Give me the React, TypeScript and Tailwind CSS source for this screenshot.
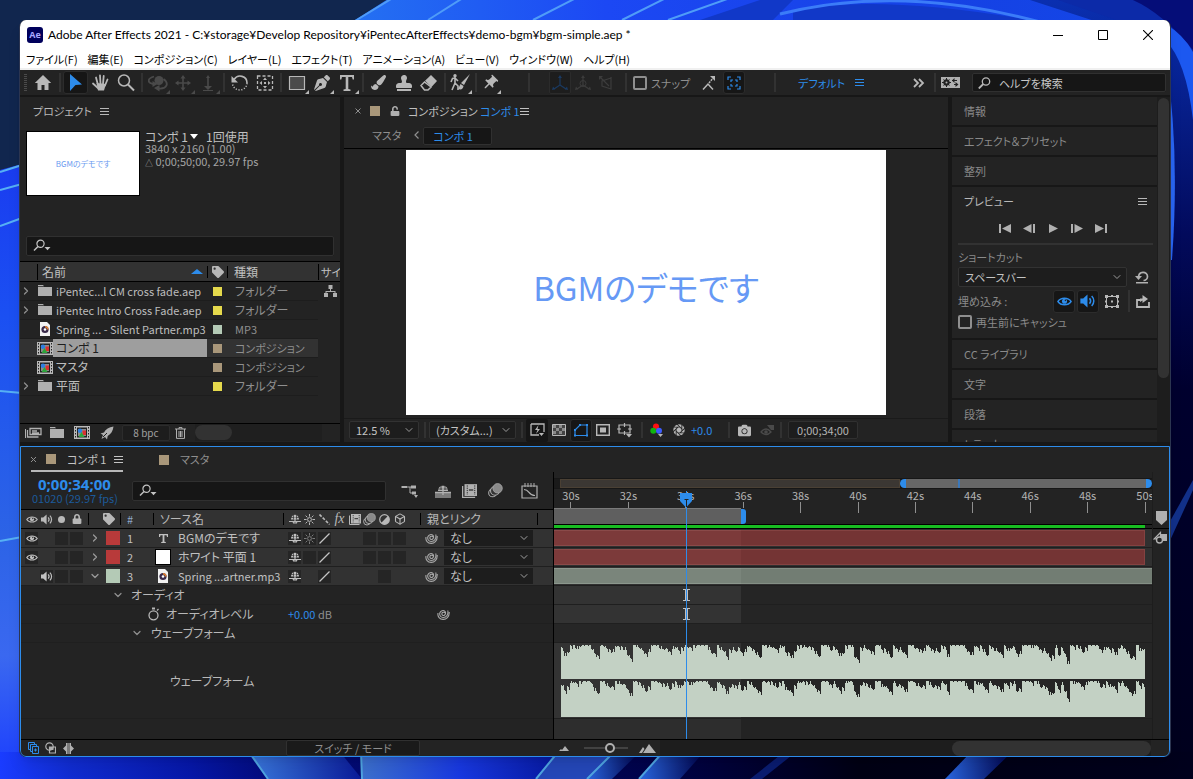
import React from "react";
import { FaCamera, FaEraser, FaLock, FaPaintBrush, FaPenNib, FaStamp, FaTag, FaUnlock } from "react-icons/fa";
import { IoAperture } from "react-icons/io5";
import { MdPushPin } from "react-icons/md";
import { Box, ChevronDown, ChevronRight } from "lucide-react";

type Kids = { children?: React.ReactNode };

function Svg({ w = 20, h = 20, className = "", children }: { w?: number; h?: number; className?: string } & Kids) {
  return (
    <svg width={w} height={h} viewBox={`0 0 ${w} ${h}`} fill="currentColor" aria-hidden="true" className={`shrink-0 ${className}`}>
      {children}
    </svg>
  );
}

/* ---------- icons ---------- */

const Burger = ({ className = "" }: { className?: string }) => (
  <Svg w={9} h={9} className={className}>
    <path d="M0 1.500h9M0 4.500h9M0 7.500h9" stroke="currentColor" strokeWidth="1" fill="none" />
  </Svg>
);

const SearchDrop = () => (
  <Svg w={18} h={14} className="text-[#c4c4c4]">
    <circle cx="7.5" cy="4.8" r="3.6" fill="none" stroke="currentColor" strokeWidth="1.2" />
    <path d="M5 7.4 1 11.4" stroke="currentColor" strokeWidth="1.4" />
    <path d="M11.5 8h6l-3 3.2z" />
  </Svg>
);

const Folder = ({ className = "" }: { className?: string }) => (
  <Svg w={14} h={12} className={`text-[#b0b0b0] ${className}`}>
    <path d="M0 0h5l1 1.2H0z M0 2h14v9H0z" />
  </Svg>
);

const CompIcon = () => (
  <Svg w={16} h={13}>
    <path d="M0 0h16v13H0z" fill="#b8b8b8" />
    <path d="M3 1.5h10v10H3z" fill="#222" />
    <path d="M1 1h1v1.5H1zM1 4h1v1.5H1zM1 7h1v1.5H1zM1 10h1v1.5H1zM14 1h1v1.5h-1zM14 4h1v1.5h-1zM14 7h1v1.5h-1zM14 10h1v1.5h-1z" fill="#222" />
    <path d="M4 3h8v7H4z" fill="#8c8c8c" />
    <circle cx="6" cy="4.8" r="2.2" fill="#2d7fe0" />
    <path d="M8.5 4.5H12V9H8.5z" fill="#d83030" />
    <path d="M7.5 6 10.5 11h-6z" fill="#2da53a" />
  </Svg>
);

const AudioFile = () => (
  <Svg w={12} h={14}>
    <path d="M1 0h7l3 3v11H1z" fill="#f2f2f2" />
    <circle cx="6" cy="7.5" r="3.6" fill="#3a2a4a" />
    <path d="M6 3.9a3.6 3.6 0 0 1 3.6 3.6H8A2 2 0 0 0 6 5.5z" fill="#e08030" />
    <circle cx="6" cy="7.5" r="1.3" fill="#fff" />
  </Svg>
);

const Eye = ({ w = 13, h = 9 }: { w?: number; h?: number }) => (
  <svg width={w} height={h} viewBox="0 0 13 9" aria-hidden="true" className="shrink-0">
    <path d="M.8 4.5C3.2.8 9.8.8 12.2 4.5 9.8 8.2 3.2 8.2.8 4.5z" fill="none" stroke="currentColor" strokeWidth="1.2" />
    <circle cx="6.5" cy="4.3" r="2.2" fill="currentColor" />
    <circle cx="7.3" cy="3.5" r=".7" fill="#222" />
  </svg>
);

const Speaker = ({ w = 12, h = 11 }: { w?: number; h?: number }) => (
  <svg width={w} height={h} viewBox="0 0 12 11" aria-hidden="true" className="shrink-0">
    <path d="M0 3.5h2.2L5.6.4v10.2L2.2 7.5H0z" fill="currentColor" />
    <path d="M7.2 3.4c1 1.2 1 3 0 4.2M8.9 1.6c2.2 2.2 2.2 5.6 0 7.8" fill="none" stroke="currentColor" strokeWidth="1.2" />
  </svg>
);

const Shy = ({ className = "" }: { className?: string }) => (
  <Svg w={12} h={10} className={className}>
    <path d="M2 5.5C2-1 10-1 10 5.5z" />
    <path d="M4.5 1v4.5M7.5 1v4.5M2 3.5h8" stroke="#333" strokeWidth=".7" />
    <path d="M0 7.5h12" stroke="currentColor" strokeWidth="1" />
    <path d="M6 1v8.5M3.500 7 5 9.500M8.500 7 7 9.500" stroke="currentColor" strokeWidth="1.200" fill="none" />
  </Svg>
);

const Sun = ({ className = "" }: { className?: string }) => (
  <Svg w={11} h={11} className={className}>
    <circle cx="5.5" cy="5.5" r="1.9" fill="none" stroke="currentColor" strokeWidth="1" />
    <path d="M5.5 0v2.6M5.5 8.4V11M0 5.5h2.6M8.4 5.5H11M1.6 1.6l1.8 1.8M7.6 7.6l1.8 1.8M1.6 9.4l1.8-1.8M7.6 3.4l1.8-1.8" stroke="currentColor" strokeWidth="1" />
  </Svg>
);

const Film = ({ w = 12, h = 11 }: { w?: number; h?: number }) => (
  <svg width={w} height={h} viewBox="0 0 12 11" aria-hidden="true" className="shrink-0">
    <path d="M2 0h10v9.5H2z" fill="currentColor" />
    <path d="M.5 1.5v9h10" fill="none" stroke="currentColor" strokeWidth="1" />
    <path d="M4.2 1v7.5M10.2 1v7.5" stroke="#292929" strokeWidth=".8" strokeDasharray="1 .8" />
    <path d="M5.5 4.7H9" stroke="#292929" strokeWidth="1" />
  </svg>
);

const Blur = ({ w = 13, h = 13 }: { w?: number; h?: number }) => (
  <svg width={w} height={h} viewBox="0 0 13 13" aria-hidden="true" className="shrink-0">
    <circle cx="4" cy="8.6" r="3.4" fill="none" stroke="currentColor" strokeWidth=".9" />
    <circle cx="6" cy="6.8" r="3.8" fill="#333" stroke="currentColor" strokeWidth=".9" />
    <circle cx="8.3" cy="4.6" r="4.1" fill="#8a8a8a" stroke="currentColor" strokeWidth=".6" />
  </svg>
);

const Spiral = () => (
  <Svg w={13} h={12} className="text-[#a8a8a8]">
    <path
      d="M7.8 5a1.6 1.6 0 1 0-.4 2.200C8.600 6.500 9 4.500 8 3.300C6.300 1.700 3.500 2.600 2.800 5C2.200 7.600 4 9.600 6.300 9.500C9.500 9.400 11.500 6.500 10.800 2.500M1 5C.3 8.500 2.700 11.500 6.300 11.400C9 11.300 12.600 9 12.200 4"
      fill="none"
      stroke="currentColor"
      strokeWidth="1.1"
    />
  </Svg>
);

const Slope = () => (
  <Svg w={11} h={11} className="text-[#c4c4c4]">
    <path d="M.5 10.5 10.5.5" stroke="currentColor" strokeWidth="1.3" />
  </Svg>
);

const Rgb = () => (
  <Svg w={14} h={15}>
    <circle cx="6" cy="3.5" r="3" fill="#ff1010" />
    <circle cx="3.3" cy="7.7" r="3" fill="#10b410" />
    <circle cx="9" cy="7.7" r="3" fill="#3c5cff" />
    <path d="M8 11h5l-2.5 3z" fill="#b4b4b4" />
  </Svg>
);

/* ---------- small controls ---------- */

const Sep = () => (
  <span className="flex h-full w-[7px] shrink-0 justify-center py-[3px]">
    <span className="w-[2px] bg-[#323232]" />
  </span>
);

function Tool({ label, on = false, dim = false, more = false, className = "w-[25px]", children }: { label: string; on?: boolean; dim?: boolean; more?: boolean; className?: string } & Kids) {
  return (
    <button
      type="button"
      aria-label={label}
      className={`relative flex h-[23px] shrink-0 items-center justify-center ${className} ${on ? "rounded-[3px] border border-[#2c2c2c] bg-[#161616] text-[#2d8ceb]" : dim ? "text-[#4a4a4a]" : "text-[#b8b8b8]"}`}
    >
      {children}
      {more && (
        <svg width="4" height="4" viewBox="0 0 4 4" className="absolute bottom-0 right-0" aria-hidden="true">
          <path d="M4 0v4H0z" fill="currentColor" />
        </svg>
      )}
    </button>
  );
}

function Drop({ label, value, className }: { label: string; value: string; className: string }) {
  return (
    <div className={`relative flex items-center border border-[#323232] bg-[#1d1d1d] ${className}`}>
      <select aria-label={label} className="h-full w-full appearance-none bg-transparent pl-[6px] pr-4 text-[11px] text-[#c4c4c4] outline-none">
        <option>{value}</option>
      </select>
      <ChevronDown size={12} strokeWidth={2} className="pointer-events-none absolute right-[3px] text-[#9a9a9a]" />
    </div>
  );
}

/* ---------- desktop ---------- */

function Wallpaper() {
  return (
    <svg className="absolute inset-0 h-full w-full" viewBox="0 0 1193 779" preserveAspectRatio="none" aria-hidden="true">
      <defs>
        <linearGradient id="top" x1="0" x2="1" y1="0" y2="0">
          <stop offset="0" stopColor="#2470f2" />
          <stop offset=".3" stopColor="#1c48f4" />
          <stop offset=".7" stopColor="#1541e4" />
          <stop offset="1" stopColor="#1448e8" />
        </linearGradient>
        <linearGradient id="left" x1="0" x2="0" y1="0" y2="1">
          <stop offset="0" stopColor="#1a3cf0" />
          <stop offset=".25" stopColor="#1b50f2" />
          <stop offset=".6" stopColor="#2c63e6" />
          <stop offset=".8" stopColor="#3a68f0" />
          <stop offset="1" stopColor="#1a3cff" />
        </linearGradient>
        <linearGradient id="right" x1="0" x2="0" y1="0" y2="1">
          <stop offset="0" stopColor="#0a2fb0" />
          <stop offset=".3" stopColor="#020a5c" />
          <stop offset=".5" stopColor="#00002e" />
          <stop offset="1" stopColor="#00001c" />
        </linearGradient>
        <linearGradient id="bottom" x1="0" x2="1" y1="0" y2="0">
          <stop offset="0" stopColor="#1a3cff" />
          <stop offset=".06" stopColor="#102cd0" />
          <stop offset=".16" stopColor="#0617a8" />
          <stop offset=".22" stopColor="#030c80" />
          <stop offset=".55" stopColor="#00034a" />
          <stop offset=".72" stopColor="#000014" />
          <stop offset="1" stopColor="#00001c" />
        </linearGradient>
        <linearGradient id="petal" x1="0" x2="1" y1="0" y2="0">
          <stop offset="0" stopColor="#3a78dc" />
          <stop offset="1" stopColor="#0a1a98" />
        </linearGradient>
        <linearGradient id="wide" x1="0" x2="1" y1="0" y2="0">
          <stop offset="0" stopColor="#3c70cc" />
          <stop offset=".5" stopColor="#1838e0" />
          <stop offset="1" stopColor="#0618a0" />
        </linearGradient>
        <linearGradient id="stripe" x1="0" x2="1" y1="0" y2="0">
          <stop offset="0" stopColor="#2a66e0" />
          <stop offset="1" stopColor="#00034a" />
        </linearGradient>
      </defs>
      <path d="M0 0h1193v779H0z" fill="#11264e" />
      <path d="M355 20 396-6H1193V40H355z" fill="url(#top)" />
      <path d="M355 21 396-4M428 20 466-4M533 20 580-4M622 20 670-4M668 20 730-2" stroke="#4f9cf8" strokeWidth="2" fill="none" />
      <path d="M700 20 760 0h33l-20 20zM793 20V10Q880-6 1030 20z" fill="#1138c8" />
      <path d="M780 14Q900-16 1040 22" stroke="#3b7cf8" strokeWidth="3" fill="none" />
      <path d="M1030 0h163v779h-40V40z" fill="url(#right)" />
      <path d="M1040-6Q1130 24 1193 48V20L1124-4z" fill="#0c2aa8" />
      <path d="M1128-2Q1160 10 1193 50V0z" fill="#050d78" />
      <path d="M1165 24Q1183 34 1193 52V120Q1186 60 1165 40z" fill="#1c58f0" />
      <path d="M1166 60Q1180 150 1172 260H1160V60z" fill="#2a66f4" />
      <path d="M1193 490 1168 545V525L1193 480z" fill="#123089" />
      <path d="M0 170 22 164V779H0z" fill="url(#left)" />
      <path d="M0 172 22 165M0 190 22 184M0 226 22 218M0 391 22 393M0 541 22 537" stroke="#56b0f4" strokeWidth="2" fill="none" />
      <path d="M0 752h1193v27H0z" fill="url(#bottom)" />
      <path d="M249 752 268 779H362L340 752z" fill="url(#petal)" />
      <path d="M361 752V779H536L558 752z" fill="url(#wide)" />
      <path d="M558 752 536 779H587L614 752z" fill="#2447b8" />
      <path d="M614 752 587 779H612L640 752z" fill="url(#stripe)" />
      <path d="M663 752 639 779H680L704 752z" fill="url(#stripe)" />
      <path d="M784 752 750 779H762L796 752z" fill="#0a1c70" />
      <path d="M971 752 945 779H984L1012 752z" fill="url(#stripe)" />
      <path d="M249 752 268 779M361 752 362 779M558 752 536 779M614 752 587 779M663 752 639 779" stroke="#4fa4e0" strokeWidth="2" fill="none" />
    </svg>
  );
}

/* ---------- window chrome ---------- */

const menus = ["ファイル(F)", "編集(E)", "コンポジション(C)", "レイヤー(L)", "エフェクト(T)", "アニメーション(A)", "ビュー(V)", "ウィンドウ(W)", "ヘルプ(H)"];

function TitleBar() {
  return (
    <header className="shrink-0 border-b-2 border-[#f0f0f0] bg-white text-black">
      <div className="flex h-[29px] items-center pl-[7px]">
        <span className="flex h-4 w-4 items-center justify-center rounded-[3px] bg-[#00005b] font-['Open_Sans',sans-serif] text-[9px] font-bold leading-none text-[#a9a6ff]">Ae</span>
        <h1 className="ml-[5px] flex-1 font-['Lato','Noto_Sans_CJK_JP',sans-serif] text-[12px] leading-4">
          Adobe After Effects 2021 - C:¥storage¥Develop Repository¥iPentecAfterEffects¥demo-bgm¥bgm-simple.aep *
        </h1>
        <button type="button" aria-label="最小化" className="flex w-[45px] justify-center">
          <Svg w={10} h={10}><path d="M0 5h10v1H0z" /></Svg>
        </button>
        <button type="button" aria-label="最大化" className="flex w-[45px] justify-center">
          <Svg w={10} h={10}><path d="M.5.5h9v9h-9z" fill="none" stroke="currentColor" /></Svg>
        </button>
        <button type="button" aria-label="閉じる" className="flex w-[45px] justify-center">
          <Svg w={10} h={10}><path d="M0 0l10 10M10 0 0 10" stroke="currentColor" strokeWidth="1.1" /></Svg>
        </button>
      </div>
      <nav className="flex h-[19px] items-center gap-[10px] pl-[6px] text-[11px] leading-4">
        {menus.map((m) => (
          <button type="button" key={m} className="whitespace-nowrap">{m}</button>
        ))}
      </nav>
    </header>
  );
}

function Toolbar() {
  return (
    <div className="flex h-[27px] shrink-0 items-center border-b-2 border-[#171717] bg-[#232323]">
      <span className="flex w-[11px] justify-center">
        <Svg w={3} h={18} className="text-[#4a4a4a]"><path d="M1.5 0v18" stroke="currentColor" strokeWidth="3" strokeDasharray="1 1" /></Svg>
      </span>
      <Tool label="ホーム" className="w-6">
        <Svg w={18} h={17}><path d="M9 1 .8 9H3.5v7h4v-5h3v5h4V9h2.7z" /></Svg>
      </Tool>
      <span className="w-[1px]" />
      <Sep />
      <Tool label="選択ツール" on>
        <Svg><path d="M4 1 16 11.5 9.5 12 4 18z" /></Svg>
      </Tool>
      <Tool label="手のひらツール">
        <Svg>
          <path d="M5.5 10 7 17.5H13L15 11z" />
          <path d="M7 12 5 4.5M9.5 11 9 2.5M12 11 12.7 3M14 12.5 16.5 6.5M7.5 15.5 2 10.5" stroke="currentColor" strokeWidth="1.8" strokeLinecap="round" />
        </Svg>
      </Tool>
      <Tool label="ズームツール">
        <Svg><circle cx="8" cy="7.5" r="5.5" fill="none" stroke="currentColor" strokeWidth="1.5" /><path d="M12 11.5 18 17.5" stroke="currentColor" strokeWidth="2" /></Svg>
      </Tool>
      <Sep />
      <Tool label="カメラ周回ツール" dim more>
        <Svg><circle cx="11" cy="7.5" r="4.5" /><path d="M6 3.5C-1 5.5-1 10 6 11M15.500 6c5.500 4 4 10-4.500 9.500" fill="none" stroke="currentColor" strokeWidth="1.8" /><path d="M11.5 12 6 15l5.500 3.500zM4.500 8v6l5-3z" /></Svg>
      </Tool>
      <Tool label="カメラパンツール" dim more>
        <Svg><path d="M10 2 7.5 5.5h1.700v3.700H5.5V7.5L2 10l3.5 2.500v-1.700h3.700v3.700H7.5L10 18l2.5-3.500h-1.700v-3.700h3.700v1.700L18 10l-3.5-2.500v1.700h-3.700V5.5h1.700z" /></Svg>
      </Tool>
      <Tool label="カメラドリーツール" dim more>
        <Svg><path d="M10 2 8 5h1.200v8H6l4 4 4-4h-3.200V5H12zM5 17h10v1H5z" /></Svg>
      </Tool>
      <Sep />
      <Tool label="回転ツール">
        <Svg><path d="M4 6.5C8 .5 17 3 17 10" fill="none" stroke="currentColor" strokeWidth="1.6" /><path d="M17 10c0 8-12.5 10-14.5 1" fill="none" stroke="currentColor" strokeWidth="1.5" strokeDasharray="1.2 1.6" /><path d="M1.5 3v6.500H8z" /></Svg>
      </Tool>
      <Tool label="アンカーポイントツール">
        <Svg>
          <path d="M2.5 3h15v14h-15z" fill="none" stroke="currentColor" strokeWidth="1.3" strokeDasharray="3 2" />
          <path d="M10 4.5 8 7h4zM10 15.5 8 13h4zM4.5 10 7 8v4zM15.5 10 13 8v4zM9 9h2v2H9z" />
        </Svg>
      </Tool>
      <Sep />
      <Tool label="長方形ツール" more>
        <Svg><path d="M2.5 3.5h15v13h-15z" fill="#4b4b4b" stroke="currentColor" strokeWidth="1.2" /></Svg>
      </Tool>
      <Tool label="ペンツール" more><FaPenNib size={16} /></Tool>
      <Tool label="文字ツール" more>
        <Svg><path d="M3 2h14v4.500h-1.300L15 4h-3.700v12l2.200.6V18h-7v-1.400l2.200-.6V4H5l-.7 2.500H3z" /></Svg>
      </Tool>
      <Sep />
      <Tool label="ブラシツール"><FaPaintBrush size={15} /></Tool>
      <Tool label="コピースタンプツール"><FaStamp size={16} /></Tool>
      <Tool label="消しゴムツール">
        <Svg><path d="M12 2 18 8 12.500 14 6 7.800z" /><path d="M5.500 9 2 12.500 5.500 17H9l3-3z" fill="none" stroke="currentColor" strokeWidth="1.500" /></Svg>
      </Tool>
      <Sep />
      <Tool label="ロトブラシツール" more className="w-6">
        <Svg>
          <circle cx="5" cy="2.7" r="1.7" />
          <path d="M5 4v6M1 9l1.500-3.500L5 5l3 3M5 10l-3 7M5 10l3 3v4" stroke="currentColor" strokeWidth="1.6" fill="none" />
          <path d="M20 1 14 12l-3-2zM10.500 11l3 2c-.5 3-2 4-5.500 3z" />
        </Svg>
      </Tool>
      <Sep />
      <Tool label="パペットピンツール" more className="w-[22px]"><MdPushPin size={18} className="rotate-45" /></Tool>
      <span className="w-6" />
      <Sep />
      <span className="w-[17px]" />
      <Tool label="ローカル軸モード" className="w-[22px] rounded-[2px] border border-[#2b2b2b] bg-[#1d1d1d]">
        <Svg w={18} h={18} className="text-[#1a3a62]"><path d="M9 3v8L3 15M9 11l6 4" fill="none" stroke="currentColor" strokeWidth="1.2" /><path d="M9 1 7 4h4zM1 16l1-3.5 2.2 2.8zM17 16l-1-3.5-2.2 2.8z" /></Svg>
      </Tool>
      <Tool label="ワールド軸モード" className="w-[23px]">
        <Svg w={18} h={18} className="text-[#3c3c3c]"><path d="M9 3v8L3 15M9 11l6 4" fill="none" stroke="currentColor" strokeWidth="1.2" /><circle cx="9" cy="9.5" r="3" fill="none" stroke="currentColor" /><path d="M9 1 7 4h4zM1 16l1-3.5 2.2 2.8zM17 16l-1-3.5-2.2 2.8z" /></Svg>
      </Tool>
      <Tool label="ビュー軸モード" className="w-[23px]">
        <Svg w={18} h={18} className="text-[#3c3c3c]"><path d="M3 3l9 9M14 3v10M14 4 5 7v5l9 3z" fill="none" stroke="currentColor" strokeWidth="1.2" /><path d="M2 2h4L2 6z" /></Svg>
      </Tool>
      <span className="w-[5px]" />
      <Sep />
      <label className="ml-1 flex items-center gap-1 whitespace-nowrap text-[11px] leading-4 text-[#8f8f8f]">
        <input type="checkbox" className="h-[14px] w-[14px] appearance-none rounded-[2px] border-2 border-[#8f8f8f]" />
        スナップ
      </label>
      <Tool label="スナップ角度" className="ml-auto w-[25px]">
        <Svg w={14} h={16}><path d="M1 14.5 6 9l5 5.5" fill="none" stroke="currentColor" strokeWidth="1.5" /><path d="M7 8 11 3" fill="none" stroke="currentColor" strokeWidth="1.5" strokeDasharray="2 1" /><path d="M8 1h5v5z" /></Svg>
      </Tool>
      <span className="w-[2px]" />
      <Tool label="スナップ範囲" on className="w-[22px]">
        <Svg w={14} h={14}><path d="M1 4V1h3M10 1h3v3M13 10v3h-3M4 13H1v-3M4 6V4h2M8 4h2v2M10 8v2H8M6 10H4V8" fill="none" stroke="currentColor" strokeWidth="1.2" /></Svg>
      </Tool>
      <span className="w-[26px]" />
      <Sep />
      <button type="button" className="ml-5 whitespace-nowrap text-[11px] leading-4 text-[#2d8ceb]">デフォルト</button>
      <Burger className="ml-[10px] text-[#2d8ceb]" />
      <button type="button" aria-label="ワークスペースを追加" className="ml-[49px] text-[#b8b8b8]">
        <Svg w={12} h={10}><path d="M1 1l4 4-4 4M6 1l4 4-4 4" fill="none" stroke="currentColor" strokeWidth="1.8" /></Svg>
      </button>
      <span className="w-[6px]" />
      <Sep />
      <button type="button" aria-label="設定を同期" className="ml-[3px] text-[#b0b0b0]">
        <Svg w={19} h={11}><path d="M0 0h19v11H0z" /><circle cx="5.5" cy="5.5" r="2.3" fill="none" stroke="#222" strokeWidth="1.8" /><path d="M5.5 1v9M1 5.5h9M2.5 2.5l6 6M8.5 2.5l-6 6" stroke="#222" strokeWidth="1" /><circle cx="5.5" cy="5.5" r="1" /><path d="M11 3.5h5M13 7.5h4" stroke="#222" strokeWidth="1.2" /><path d="M13.5 1v5L11 3.5zM14.5 5v5l3-2.5z" fill="#222" /></Svg>
      </button>
      <label className="ml-3 mr-1 flex h-[19px] w-[194px] items-center rounded-[2px] border border-[#303030] bg-[#161616] pl-[5px]">
        <Svg w={13} h={12} className="text-[#b8b8b8]"><circle cx="8" cy="4.5" r="3.7" fill="none" stroke="currentColor" strokeWidth="1.3" /><path d="M5.3 7 .8 11.5" stroke="currentColor" strokeWidth="1.8" /></Svg>
        <input aria-label="ヘルプを検索" placeholder="ヘルプを検索" className="ml-2 w-full bg-transparent text-[11px] leading-4 outline-none placeholder:text-[#c8c8c8]" />
      </label>
    </div>
  );
}

/* ---------- project panel ---------- */

type Item = { name: string; kind: string; icon: "folder" | "audio" | "comp"; color: string; open?: boolean; selected?: boolean; latin?: boolean };
const items: Item[] = [
  { name: "iPentec...l CM cross fade.aep", kind: "フォルダー", icon: "folder", color: "bg-[#e5d94c]", open: true, latin: true },
  { name: "iPentec Intro Cross Fade.aep", kind: "フォルダー", icon: "folder", color: "bg-[#e5d94c]", open: true, latin: true },
  { name: "Spring ... - Silent Partner.mp3", kind: "MP3", icon: "audio", color: "bg-[#b4cab6]", latin: true },
  { name: "コンポ 1", kind: "コンポジション", icon: "comp", color: "bg-[#a9977a]", selected: true },
  { name: "マスタ", kind: "コンポジション", icon: "comp", color: "bg-[#a9977a]" },
  { name: "平面", kind: "フォルダー", icon: "folder", color: "bg-[#e5d94c]", open: true },
];

function ProjectPanel() {
  return (
    <section className="flex w-80 shrink-0 flex-col bg-[#232323] text-[12px]">
      <div className="flex h-7 shrink-0 items-center gap-2 pl-[13px] text-[#b8b8b8]">
        <h2 className="text-[11px]">プロジェクト</h2>
        <Burger />
      </div>
      <div className="mt-[6px] flex gap-[5px] pl-[6px]">
        <div className="flex h-[65px] w-[114px] items-center justify-center border border-black bg-white text-[8px] text-[#6c9cf0]">BGMのデモです</div>
        <div className="text-[11px] leading-[13px] text-[#a4a4a4]">
          <p className="flex h-[11px] items-center text-[12px] leading-[11px] text-[#c0c0c0]">
            コンポ 1<Svg w={8} h={5} className="ml-[2px] mr-2 text-white"><path d="M0 0h8L4 5z" /></Svg>1回使用
          </p>
          <p>3840 x 2160 (1.00)</p>
          <p><span className="text-[8px]">△</span> 0;00;50;00, 29.97 fps</p>
        </div>
      </div>
      <label className="mx-[6px] mt-10 flex h-5 shrink-0 items-center rounded-[2px] border border-[#303030] bg-[#161616] pl-[6px]">
        <SearchDrop />
        <input aria-label="プロジェクトを検索" className="w-full bg-transparent text-[#c4c4c4] outline-none" />
      </label>
      <div className="mt-[5px] min-h-0 flex-1 overflow-hidden">
        <table className="w-full table-fixed border-collapse text-left">
          <colgroup>
            <col className="w-[17px]" /><col className="w-[170px]" /><col className="w-[21px]" /><col className="w-[90px]" /><col />
          </colgroup>
          <thead className="h-5 border-y border-black bg-[#323232] text-[#c0c0c0]">
            <tr>
              <th className="h-[18px] p-0" aria-label="展開" />
              <th className="p-0 font-normal leading-4"><span className="flex items-center border-l border-black pl-1">名前<Svg w={12} h={5} className="ml-auto mr-1 text-[#2d8ceb]"><path d="M6 0l6 5H0z" /></Svg></span></th>
              <th className="p-0" aria-label="ラベル"><span className="flex h-3 items-center justify-center border-x border-black"><FaTag size={12} className="text-[#b8b8b8]" /></span></th>
              <th className="p-0 pl-[6px] font-normal leading-4">種類</th>
              <th className="whitespace-nowrap p-0 text-[11px] font-normal leading-4"><span className="block border-l border-black pl-[2px]">サイ</span></th>
            </tr>
          </thead>
          <tbody>
            {items.map((it, i) => (
              <tr key={it.name} className={`h-[19px] ${it.selected ? "bg-[#323232]" : ""}`}>
                <td className="border-b border-[#1d1d1d] p-0">{it.open && <ChevronRight size={12} strokeWidth={2.5} className="text-[#8f8f8f]" />}</td>
                <td className="border-b border-[#1d1d1d] p-0">
                  <span className="flex h-[18px] items-center">
                    <span className="flex w-[16px] shrink-0 justify-center">
                      {it.icon === "folder" ? <Folder /> : it.icon === "audio" ? <AudioFile /> : <CompIcon />}
                    </span>
                    <span className={`flex-1 whitespace-nowrap pl-[3px] leading-[18px] ${it.latin ? "text-[11px]" : "text-[12px]"} ${it.selected ? "bg-[#9e9e9e] text-[#1d1d1d]" : "text-[#bdbdbd]"}`}>{it.name}</span>
                  </span>
                </td>
                <td className="border-b border-[#1d1d1d] p-0"><span className={`mx-auto block h-[9px] w-[9px] ${it.color}`} /></td>
                <td className={`whitespace-nowrap border-b border-[#1d1d1d] p-0 pl-[7px] leading-4 text-[#8f8f8f] ${it.icon === "folder" ? "text-[12px]" : "text-[11px]"}`}>{it.kind}</td>
                <td className={i === 0 ? "p-0" : "bg-[#232323] p-0"}>
                  {i === 0 && <Svg w={13} h={12} className="ml-[6px] text-[#b0b0b0]"><path d="M4.5 0h4v4h-4zM0 8h4v4H0zM9 8h4v4H9zM6 4h1v2h4.5v2h-1V7h-8v1h-1V6H6z" /></Svg>}
                </td>
              </tr>
            ))}
          </tbody>
        </table>
      </div>
      <div className="flex h-[19px] shrink-0 items-center border-t border-black pb-[1px] pl-1 text-[#b0b0b0]">
        <button type="button" aria-label="フッテージを変換" className="flex w-[18px] justify-center"><Svg w={17} h={11}><path d="M5 1.5h11v6H5zM2.5 3v7h11M7 4h5M7 6h7" fill="none" stroke="currentColor" strokeWidth="1.3" /><path d="M0 2h1v9H0z" /></Svg></button>
        <button type="button" aria-label="新規フォルダー" className="ml-2 flex w-[14px] justify-center"><Folder /></button>
        <button type="button" aria-label="新規コンポジション" className="ml-[10px] flex w-4 justify-center"><CompIcon /></button>
        <button type="button" aria-label="プロジェクト設定" className="ml-[10px] flex w-[14px] justify-center"><Svg w={14} h={14}><path d="M13.5.5C9 1 5.5 3.5 4 6.5L.5 7.5 3 9l-1.500 4L5 11l2 2.500.7-3.500C11 8 13 5 13.500.5z" /><path d="M3 11 7 7" stroke="#222" /></Svg></button>
        <button type="button" className="ml-2 h-4 w-12 rounded-[2px] border border-[#2c2c2c] bg-[#1d1d1d] text-[10px] leading-3 text-[#a0a0a0]">8 bpc</button>
        <button type="button" aria-label="削除" className="ml-[3px] flex w-[14px] justify-center"><Svg w={11} h={12}><path d="M0 2h11M4 2V.6h3V2M1.5 2v9.400h8V2M4 4v6M5.500 4v6M7 4v6" fill="none" stroke="currentColor" strokeWidth="1" /></Svg></button>
        <span className="ml-2 flex h-full flex-1 items-center bg-[#1f1f1f]"><span className="h-[15px] w-[37px] rounded-full bg-[#323232]" /></span>
        <span className="w-[18px]" />
      </div>
    </section>
  );
}

/* ---------- composition panel ---------- */

function CompPanel() {
  return (
    <section className="flex min-w-0 flex-1 flex-col bg-[#232323] text-[11px]">
      <div className="flex h-7 shrink-0 items-center pl-[11px] text-[#c0c0c0]">
        <button type="button" aria-label="タブを閉じる"><Svg w={6} h={6} className="text-[#8f8f8f]"><path d="M.5.5l5 5M5.5.5l-5 5" stroke="currentColor" /></Svg></button>
        <span className="ml-[9px] h-[10px] w-[10px] bg-[#a9977a]" />
        <FaUnlock size={10} className="ml-[10px] text-[#b0b0b0]" />
        <h2 className="ml-2">コンポジション <span className="text-[#2d8ceb]">コンポ 1</span></h2>
        <Burger className="ml-0" />
      </div>
      <div className="flex h-6 shrink-0 items-start border-b border-black pl-7">
        <button type="button" className="pt-[2px] leading-4 text-[#8f8f8f]">マスタ</button>
        <Svg w={5} h={8} className="ml-[13px] mt-[6px] text-[#8f8f8f]"><path d="M4.5.5 1 4l3.5 3.5" fill="none" stroke="currentColor" strokeWidth="1.2" /></Svg>
        <button type="button" className="ml-1 mt-[2px] h-[18px] w-[69px] rounded-[2px] border border-[#303030] bg-[#161616] pl-[9px] text-left leading-4 text-[#2d8ceb]">コンポ 1</button>
      </div>
      <div className="flex min-h-0 flex-1 items-start justify-center border-b border-[#1a1a1a] pt-[1px]">
        <div className="flex h-[265px] w-[480px] items-center justify-center bg-white pt-2 text-[33px] leading-10 text-[#6699f5]">BGMのデモです</div>
      </div>
      <div className="flex h-[23px] shrink-0 items-center pb-[1px] pl-[5px] text-[#b4b4b4]">
        <Drop label="拡大率" value="12.5 %" className="h-[18px] w-[70px] rounded-[2px]" />
        <span className="w-[2px]" /><Sep /><span className="w-[1px]" />
        <Drop label="解像度" value="(カスタム...)" className="h-[18px] w-[87px] rounded-[2px]" />
        <span className="w-[2px]" /><Sep /><span className="w-[1px]" />
        <Tool label="高速プレビュー" className="w-[22px] rounded-[2px] bg-[#161616]"><Svg w={15} h={14}><path d="M1 1h13v8M9 12H1V1" fill="none" stroke="currentColor" strokeWidth="1.3" /><path d="M8.5 2 5 7h2.5L6 11l4-5H7.500zM9 10h5l-2.500 3z" /></Svg></Tool>
        <Tool label="透明グリッド" className="w-[22px]"><Svg w={14} h={12}><path d="M.5.5h13v11H.5z" fill="#444" stroke="currentColor" /><path d="M1 1h3v3H1zM7 1h3v3H7zM4 4h3v3H4zM10 4h3v3h-3zM1 7h3v3H1zM7 7h3v3H7z" fill="#8a8a8a" /></Svg></Tool>
        <Tool label="マスクシェイプ" on className="h-[20px] w-[22px]"><Svg w={16} h={14}><path d="M2 12.5V7L7 2h7v10.5z" fill="none" stroke="currentColor" strokeWidth="1.2" /><path d="M1 11.5h2v2H1zM13 1h2v2h-2zM13 11.5h2v2h-2zM6 1h2v2H6zM1 6h2v2H1z" /></Svg></Tool>
        <Tool label="目標範囲" className="w-[22px]"><Svg w={14} h={12}><path d="M.7.7h12.6v10.6H.7z" fill="none" stroke="currentColor" strokeWidth="1.4" /><path d="M4 3.5h6v5H4z" /></Svg></Tool>
        <Tool label="グリッドとガイド" className="w-[22px]"><Svg w={16} h={15}><path d="M2 2h11v8H2zM7.5 0v4M7.5 8v4M0 6h4M11 6h4" fill="none" stroke="currentColor" strokeWidth="1.2" /><path d="M9 11h6l-3 3.5z" /></Svg></Tool>
        <span className="w-[2px]" /><Sep />
        <Tool label="チャンネル" className="w-[24px]"><Rgb /></Tool>
        <Tool label="露出をリセット" className="w-[20px]"><IoAperture size={14} /></Tool>
        <span className="ml-[2px] w-[34px] text-[#2d8ceb]">+0.0</span>
        <Sep />
        <Tool label="スナップショット"><FaCamera size={13} /></Tool>
        <Tool label="スナップショットを表示" dim className="w-[20px]"><Svg w={15} h={14}><path d="M1 9q5-6 10 0-5 5-10 0z" fill="none" stroke="currentColor" strokeWidth="1.3" /><circle cx="6" cy="9" r="1.8" /><path d="M7 2h7v5h-3z" /></Svg></Tool>
        <Sep />
        <span className="ml-1 flex h-[18px] w-[70px] items-center justify-center rounded-[2px] border border-[#303030] bg-[#1d1d1d]">0;00;34;00</span>
      </div>
    </section>
  );
}

/* ---------- right column ---------- */

const Collapsed = ({ children }: Kids) => (
  <h2 className="h-[30px] shrink-0 border-b-2 border-[#171717] pl-3 leading-7 text-[#8a8a8a]">{children}</h2>
);

function SidePanels() {
  return (
    <aside className="flex w-[218px] shrink-0 bg-[#1d1d1d] text-[11px]">
      <div className="flex w-[205px] flex-col overflow-hidden bg-[#232323]">
        <Collapsed>情報</Collapsed>
        <Collapsed>エフェクト＆プリセット</Collapsed>
        <Collapsed>整列</Collapsed>
        <section className="shrink-0 border-b-2 border-[#171717]">
          <div className="flex h-7 items-center justify-between pl-3 pr-[10px] text-[#b8b8b8]"><h2>プレビュー</h2><Burger /></div>
          <div className="ml-[6px] mr-1 flex h-[30px] items-center justify-center gap-3 border-b-2 border-[#323232] pb-[2px] pr-[6px] text-[#b0b0b0]">
            {[
              ["最初のフレーム", "M0 0h2v9H0zM12 0v9L3 4.5z"],
              ["前のフレーム", "M10 0h2v9h-2zM8.5 0v9L0 4.5z"],
              ["再生", "M2 0v9l9-4.5z"],
              ["次のフレーム", "M0 0h2v9H0zM3.5 0v9L12 4.5z"],
              ["最後のフレーム", "M10 0h2v9h-2zM0 0v9l9-4.5z"],
            ].map(([l, d]) => (
              <button type="button" key={l} aria-label={l}><Svg w={12} h={9}><path d={d} /></Svg></button>
            ))}
          </div>
          <div className="flex flex-col pl-[6px] pr-1 pt-1 text-[#8a8a8a]">
            <span className="leading-4">ショートカット</span>
            <div className="mt-[2px] flex items-center gap-2">
              <Drop label="ショートカット" value="スペースバー" className="h-5 w-[169px] rounded-[2px]" />
              <button type="button" aria-label="リセット" className="text-[#b0b0b0]"><Svg w={14} h={13}><path d="M3.5 6.5C3.500-.5 12.500 0 12.500 5.500c0 2-1.500 4-4 4" fill="none" stroke="currentColor" strokeWidth="1.7" /><path d="M0 5h7L3.5 9zM1 11h12v1.400H1z" /></Svg></button>
            </div>
            <div className="flex h-7 items-center">
              <span className="w-[95px]">埋め込み :</span>
              <Tool label="ビデオ" on className="h-5 w-[22px]"><Eye w={15} h={11} /></Tool>
              <Tool label="オーディオ" on className="ml-[2px] h-5 w-[22px]"><Speaker w={18} h={14} /></Tool>
              <Tool label="オーバーレイ" className="w-[26px]"><Svg w={16} h={15}><path d="M2.5 2.5h11v10h-11z" fill="none" stroke="currentColor" /><path d="M1 1h3v3H1zM12 1h3v3h-3zM1 11h3v3H1zM12 11h3v3h-3zM7 1h2v2H7zM7 12h2v2H7zM1 6.5h2v2H1zM13 6.5h2v2h-2zM7 6.5h2v2H7z" /></Svg></Tool>
              <Sep />
              <Tool label="ループ" className="w-[21px]"><Svg w={14} h={13}><path d="M4 5H1v7h12V7" fill="none" stroke="currentColor" strokeWidth="1.8" /><path d="M4 7V3.5h2.5V0l5.500 4-5.500 4V5.500z" /></Svg></Tool>
            </div>
            <label className="flex h-[14px] items-center gap-1 whitespace-nowrap">
              <input type="checkbox" className="h-[14px] w-[14px] appearance-none rounded-[2px] border-2 border-[#8f8f8f]" />
              再生前にキャッシュ
            </label>
            <span className="h-[9px]" />
          </div>
        </section>
        <Collapsed>CC ライブラリ</Collapsed>
        <Collapsed>文字</Collapsed>
        <Collapsed>段落</Collapsed>
        <Collapsed>トラッカー</Collapsed>
      </div>
      <span className="ml-[1px] mt-[1px] h-[280px] w-[11px] rounded-full bg-[#323232]" />
    </aside>
  );
}

/* ---------- timeline ---------- */

const Bar = () => <span className="h-3 w-[1px] bg-black" />;

const layers = [
  { n: 1, name: "BGMのデモです", color: "bg-[#b83a3a]", eye: true, audio: false, sun: true, boxes: [5, 6, 7] },
  { n: 2, name: "ホワイト 平面 1", color: "bg-[#b83a3a]", eye: true, audio: false, sun: false, boxes: [1, 5, 6, 7] },
  { n: 3, name: "Spring ...artner.mp3", color: "bg-[#b4cab6]", eye: false, audio: true, sun: false, boxes: [6] },
];

const Cell = ({ on = true, children }: { on?: boolean } & Kids) => (
  <span className="flex w-[15px] shrink-0 justify-center">
    <span className={`flex h-[13px] w-[13px] items-center justify-center ${on ? "bg-[#252525]" : ""}`}>{children}</span>
  </span>
);

function LayerRow({ l }: { l: (typeof layers)[number] }) {
  return (
    <div className="flex h-[19px] items-center border-b border-[#1f1f1f] bg-[#323232] pl-[3px] text-[#c0c0c0]">
      <Cell on={l.eye}>{l.eye && <Eye w={12} h={9} />}</Cell>
      <Cell on={l.audio}>{l.audio && <Speaker />}</Cell>
      <Cell /><Cell />
      <span className="flex w-[22px] justify-center text-[#9a9a9a]">
        {l.audio ? <ChevronDown size={12} strokeWidth={2.5} /> : <ChevronRight size={12} strokeWidth={2.5} />}
      </span>
      <span className={`h-[14px] w-[14px] ${l.color}`} />
      <span className="w-[34px] pl-[7px] text-[11px] leading-4">{l.n}</span>
      <span className="flex w-[18px] justify-center">
        {l.n === 1 && <Svg w={9} h={9}><path d="M0 0h9v3H8L7.5 1.2H5.4v6.6L6.8 8v1H2.2V8l1.4-.2V1.2H1.5L1 3H0z" /></Svg>}
        {l.n === 2 && <span className="h-4 w-4 border border-black bg-white" />}
        {l.n === 3 && <AudioFile />}
      </span>
      <span className={`w-[115px] whitespace-nowrap pl-[6px] leading-[18px] ${l.audio ? "text-[11px]" : "text-[12px]"}`}>{l.name}</span>
      <Cell><Shy /></Cell>
      {l.sun ? <Cell><Sun className="text-[#7a7a7a]" /></Cell> : <Cell on={l.boxes.includes(1)} />}
      <Cell><Slope /></Cell>
      {[3, 4, 5, 6, 7].map((c) => <Cell key={c} on={l.boxes.includes(c)} />)}
      <span className="flex w-[37px] justify-end pr-[6px]"><Spiral /></span>
      <div className="relative flex h-4 w-[89px] items-center bg-[#1d1d1d]">
        <select aria-label={`レイヤー ${l.n} の親`} className="h-full w-full appearance-none bg-transparent pl-[6px] leading-4 outline-none"><option>なし</option></select>
        <ChevronDown size={12} strokeWidth={2} className="pointer-events-none absolute right-[3px] text-[#a0a0a0]" />
      </div>
    </div>
  );
}

function TimelineLeft() {
  return (
    <div className="flex w-[533px] shrink-0 flex-col border-r border-black">
      <div className="flex h-[37px] shrink-0 items-center">
        <div className="w-[111px] pl-[11px] text-[#2d8ceb]">
          <p className="whitespace-nowrap pl-[6px] font-['Open_Sans',sans-serif] text-[15px] font-bold leading-4">0;00;34;00</p>
          <p className="whitespace-nowrap text-[11px] leading-[13px] text-[#1c5a9a]">01020 (29.97 fps)</p>
        </div>
        <label className="flex h-5 w-[254px] items-center rounded-[2px] border border-[#303030] bg-[#161616] pl-[6px]">
          <SearchDrop />
          <input aria-label="タイムラインを検索" className="w-full bg-transparent text-[#c4c4c4] outline-none" />
        </label>
        <div className="flex flex-1 items-center pl-[15px] text-[#b0b0b0]">
          <button type="button" aria-label="ミニフローチャート"><Svg w={18} h={14}><path d="M0 3h7M7 3h3M9 3v6h3" fill="none" stroke="currentColor" strokeWidth="1" /><path d="M1 2h5v2H1zM10 1.5h5v3h-5zM11 7.5h4v3h-4zM13 11h4l-2 3z" /></Svg></button>
          <button type="button" aria-label="シャイレイヤー" className="ml-4"><Svg w={16} h={14}><path d="M3 7C3 0 13 0 13 7z" /><path d="M6 2v4M10 2v4M3 5h10" stroke="#333" strokeWidth=".8" /><path d="M0 9h16v5H0z" fill="#7a7a7a" /><path d="M8 3v8M0 8.5h16" stroke="currentColor" strokeWidth="1.3" /></Svg></button>
          <button type="button" aria-label="フレームブレンド" className="ml-[11px]"><Film w={15} h={14} /></button>
          <button type="button" aria-label="モーションブラー" className="ml-[11px]"><Blur w={15} h={15} /></button>
          <button type="button" aria-label="グラフエディター" className="ml-[18px]"><Svg w={17} h={16}><path d="M1 3h15v12H1z" fill="none" stroke="currentColor" strokeWidth="1.2" /><path d="M4 0v4M7 0v4M10 0v4M13 0v4" stroke="currentColor" strokeWidth="1" /><path d="M3 6.5c6 0 4 6 11 6" fill="none" stroke="currentColor" strokeWidth="1.2" /></Svg></button>
        </div>
      </div>
      <div className="flex h-5 shrink-0 items-center border-y border-black bg-[#323232] pl-[3px] text-[#b8b8b8]">
        <span className="flex w-[15px] justify-center"><Eye w={12} h={9} /></span>
        <span className="flex w-[15px] justify-center"><Speaker /></span>
        <span className="flex w-[15px] justify-center"><span className="h-[7px] w-[7px] rounded-full bg-[#b8b8b8]" /></span>
        <span className="flex w-[15px] justify-center"><FaLock size={10} /></span>
        <span className="w-1" /><Bar />
        <span className="flex w-[31px] justify-center pl-2"><FaTag size={12} /></span><Bar />
        <span className="w-8 pl-[6px] text-[11px] text-[#8fa8c8]">#</span><Bar />
        <span className="w-[129px] pl-[6px] text-[12px] leading-4">ソース名</span><Bar />
        <span className="w-[3px]" />
        <span className="flex w-[15px] justify-center"><Shy /></span>
        <span className="flex w-[15px] justify-center"><Sun /></span>
        <span className="flex w-[15px] justify-center"><Svg w={11} h={11}><path d="M.5.5l10 10" stroke="currentColor" strokeWidth="1.6" strokeDasharray="3 1.5" /></Svg></span>
        <span className="flex w-[15px] justify-center font-['Liberation_Serif',serif] text-[14px] italic leading-4">fx</span>
        <span className="flex w-[15px] justify-center"><Film /></span>
        <span className="flex w-[15px] justify-center"><Blur /></span>
        <span className="flex w-[15px] justify-center"><Svg w={11} h={11}><circle cx="5.5" cy="5.5" r="4.8" fill="none" stroke="currentColor" strokeWidth="1.2" /><path d="M8.9 2.1A4.8 4.8 0 0 1 2.1 8.9z" /></Svg></span>
        <span className="flex w-[15px] justify-center"><Box size={12} strokeWidth={2.2} /></span>
        <span className="w-[13px]" /><Bar />
        <span className="w-[116px] pl-[6px] text-[12px] leading-4">親とリンク</span><Bar />
      </div>
      {layers.map((l) => <LayerRow key={l.n} l={l} />)}
      <div className="flex h-[19px] items-center border-b border-[#1f1f1f] pl-[91px] text-[#b8b8b8]"><ChevronDown size={12} strokeWidth={2.5} className="text-[#8f8f8f]" /><span className="pl-[7px] leading-4">オーディオ</span></div>
      <div className="flex h-[19px] items-center border-b border-[#1f1f1f] pl-[127px] text-[#b8b8b8]">
        <Svg w={11} h={14}><circle cx="5.5" cy="8.3" r="4.5" fill="none" stroke="currentColor" strokeWidth="1.3" /><path d="M4 .5h3v2H4z" /><path d="M9 3.5l1.5-1.5" stroke="currentColor" strokeWidth="1.3" /></Svg>
        <span className="w-[129px] pl-[7px] leading-4">オーディオレベル</span>
        <span className="w-[149px] text-[11px] leading-4"><span className="text-[#2d8ceb]">+0.00</span> <span className="text-[#8f8f8f]">dB</span></span>
        <Spiral />
      </div>
      <div className="flex h-[19px] items-center border-b border-[#1f1f1f] pl-[110px] text-[#b8b8b8]"><ChevronDown size={12} strokeWidth={2.5} className="text-[#8f8f8f]" /><span className="pl-2 leading-4">ウェーブフォーム</span></div>
      <div className="flex h-[76px] items-center border-b border-[#1f1f1f] pl-[149px] leading-4 text-[#b8b8b8]">ウェーブフォーム</div>
      <div className="flex-1" />
    </div>
  );
}

/* loudness dips of the audio, one value for every three columns */
const dips = [
  4, 10, 7, 1, 1, 3, 1, 0, 0, 0, 4, 9, 12, 0, 1, 4, 6, 6, 1, 2, 3, 4, 10, 14, 0, 1, 3, 6, 10, 6, 0, 0, 1, 3, 4, 4, 8, 3, 2, 6, 4, 1, 2, 3, 1, 0, 0, 0, 0, 4, 8, 9, 1, 4, 6, 12, 6, 4, 6, 3, 9, 6, 1, 3, 6, 9, 12,
  0, 1, 1, 2, 4, 6, 2, 1, 8, 9, 12, 6, 1, 1, 1, 2, 2, 4, 8, 11, 0, 0, 1, 5, 2, 6, 10, 8, 1, 0, 1, 12, 15, 4, 2, 4, 6, 8, 0, 0, 5, 5, 8, 12, 1, 5, 4, 7, 10, 0, 0, 3, 4, 6, 5, 0, 3, 6, 5, 7, 1, 3, 11, 0, 0, 0,
  0, 0, 4, 8, 9, 1, 3, 2, 6, 10, 1, 4, 5, 7, 10, 2, 5, 3, 2, 10, 8, 0, 0, 0, 2, 0, 2, 6, 5, 8, 13, 12, 2, 10, 3, 10, 18, 0, 2, 1, 3, 7, 3, 0, 0, 0, 1, 6, 4, 2, 5, 5, 9, 3, 1, 5, 8, 13, 12, 0, 5, 4,
];

function channel(base: number, top: number, seed: number) {
  let d = `M0 ${base}`;
  dips.forEach((v, i) => {
    for (let k = 0; k < 3; k++) {
      const j = (i * 7 + k * 5 + seed) % 4;
      const depth = v === 0 ? (j === 3 ? 1 : 0) : Math.max(0, v + (k === 2 ? 2 : 0) + j - 2);
      d += `V${top + depth}H${i * 3 + k + 1}`;
    }
  });
  return `${d}V${base}z`;
}

const marks = ["30s", "32s", "34s", "36s", "38s", "40s", "42s", "44s", "46s", "48s", "50s"];

function Track({ color, lit, full = false }: { color: string; lit: string; full?: boolean }) {
  return (
    <div className="flex h-[19px] border-b border-[#1f1f1f] bg-[#303030]">
      <span className={`my-[1px] w-[31.3%] border-y ${lit}`} />
      <span className={`my-[1px] border-y ${color} ${full ? "flex-1" : "w-[67.5%] border-r"}`} />
    </div>
  );
}

const Ibeam = () => (
  <span className="absolute left-[21.5%] top-[3px] text-[#c0c0c0]"><Svg w={7} h={12}><path d="M0 .5h3M4 .5h3M0 11.5h3M4 11.5h3M2.5 1v10M4.5 1v10" stroke="currentColor" /></Svg></span>
);

function TimelineRight() {
  return (
    <div className="relative flex min-w-0 flex-1 flex-col overflow-hidden bg-[#232323]">
      <div className="mt-[6px] flex h-[11px] shrink-0 border-y border-[#171717] bg-[#1a1a1a] pl-[6px]">
        <span className="w-[57.5%] border border-[#4a4034] bg-[#3b3733]" />
        <span className="w-[6px] rounded-l-full bg-[#2d8ceb]" />
        <span className="flex-1 bg-[#676767] pl-[8.7%]"><span className="block h-full w-[2px] bg-[#3d78b8]" /></span>
        <span className="w-[6px] rounded-r-full bg-[#2d8ceb]" />
      </div>
      <div className="relative h-[19px] shrink-0 text-[11px] leading-[13px] text-[#b4b4b4]">
        {marks.map((m, i) => (
          <span key={m} className="absolute top-0 flex w-8 -translate-x-1/2 flex-col items-center" style={{ left: `${((17 + 57.4 * i) / 598) * 100}%` }}>
            {m}
            <span className={`w-[1px] bg-[#8f8f8f] ${i < 4 ? "h-[6px]" : "h-[11px]"}`} />
          </span>
        ))}
      </div>
      <div className="flex h-[17px] shrink-0 border-b border-black">
        <span className="w-[31.3%] border-t border-[#7a7a7a] bg-[#5f5f5f]" />
        <span className="mt-[1px] w-[5px] rounded-r-[3px] bg-[#2d8ceb]" />
      </div>
      <div className="h-1 shrink-0 border-b border-black"><div className="h-[3px] w-[98.8%] bg-[#18bd22]" /></div>
      <Track lit="bg-[#7c3a3a] border-[#8a4a49]" color="bg-[#743434] border-[#844241]" />
      <Track lit="bg-[#7c3a3a] border-[#8a4a49]" color="bg-[#743434] border-[#844241]" />
      <Track full lit="bg-[#7a857b] border-[#8c978d]" color="bg-[#727d73] border-[#848f85]" />
      {["audio", "level"].map((k) => (
        <div key={k} className="relative h-[19px] border-b border-[#1f1f1f] bg-[#252525]"><div className="h-full w-[31.3%] bg-[#333333]" /><Ibeam /></div>
      ))}
      <div className="h-[19px] border-b border-[#1f1f1f] bg-[#262626]" />
      <div className="relative h-[76px] border-b border-[#1f1f1f] bg-[#252525]">
        <div className="h-full w-[31.3%] bg-[#333333]" />
        <svg className="absolute left-[1.2%] top-0 h-full w-[97.6%] text-[#c3d1c4]" viewBox="0 0 585 76" preserveAspectRatio="none" shapeRendering="crispEdges" fill="currentColor" aria-label="波形">
          <path d={channel(36, 2, 0)} />
          <path d={channel(75, 39, 2)} />
        </svg>
      </div>
      <div className="flex-1"><div className="h-full w-[31.3%] bg-[#2d2d2d]" /></div>
      <div className="absolute bottom-0 left-[22%] top-[19px] w-[1px] bg-[#2d8ceb]">
        <Svg w={12} h={14} className="absolute -left-[6px] top-[2px]"><path d="M0 0h12v8l-5.5 6h-1L0 8z" fill="#2d8ceb" /><path d="M4.5 6.5h4M6.5 6.5V14" stroke="#222" /></Svg>
      </div>
    </div>
  );
}

function Timeline() {
  return (
    <section className="mt-1 flex h-[311px] shrink-0 flex-col rounded-b-[6px] border border-[#2d8ceb] bg-[#232323] text-[12px]">
      <div className="flex h-[25px] shrink-0 items-stretch pl-[10px] text-[11px]">
        <div className="flex w-[92px] items-center border-b-2 border-[#b8b8b8] pt-[1px] text-[#c4c4c4]">
          <button type="button" aria-label="タブを閉じる"><Svg w={5} h={5} className="text-[#8f8f8f]"><path d="M0 0l5 5M5 0 0 5" stroke="currentColor" /></Svg></button>
          <span className="ml-[10px] h-[10px] w-[10px] shrink-0 bg-[#a9977a]" />
          <h2 className="ml-[11px] flex-1 whitespace-nowrap">コンポ 1</h2>
          <Burger />
        </div>
        <div className="ml-9 flex items-center gap-[11px] text-[#8f8f8f]"><span className="h-[10px] w-[10px] bg-[#a9977a]" /><button type="button">マスタ</button></div>
      </div>
      <div className="flex min-h-0 flex-1">
        <TimelineLeft />
        <TimelineRight />
        <div className="w-[17px] shrink-0 border-l border-[#1d1d1d] pt-[39px] text-[#b0b0b0]">
          <Svg w={16} h={40}><path d="M3 0h11v9l-5.5 5L3 9z" /><path d="M0 17.5h16" stroke="#000" /><path d="M8 23h6v7H8z" /><path d="M7.5 21.5 1 28h6.5z" fill="#232323" stroke="currentColor" strokeWidth="1.2" /><circle cx="6.5" cy="29" r="3" fill="#232323" stroke="currentColor" strokeWidth="1.4" /></Svg>
        </div>
      </div>
      <div className="flex h-[17px] shrink-0 items-center rounded-b-[5px] border-t border-black pl-1 text-[#b0b0b0]">
        <button type="button" aria-label="レイヤースイッチ" className="flex w-4 justify-center text-[#2d8ceb]"><Svg w={11} h={12}><path d="M2.5 7.5h-2v-7h6v2M4.5 9.5h-2v-7h6v2M4.5 4.5h6v7h-6zM6 8h3M7.5 6.5v3" fill="none" stroke="currentColor" strokeWidth="1" /></Svg></button>
        <button type="button" aria-label="転送制御" className="flex w-[18px] justify-center"><Svg w={11} h={12}><circle cx="4.5" cy="4.5" r="3.7" fill="none" stroke="currentColor" strokeWidth="1.2" /><path d="M4.5 5h6v6h-6z" fill="none" stroke="currentColor" strokeWidth="1.2" /><path d="M5 5h3.5v3H5z" /></Svg></button>
        <button type="button" aria-label="イン/アウト" className="flex w-[18px] justify-center"><Svg w={11} h={11}><path d="M4 0h3v11H4z" fill="#7a7a7a" /><path d="M3 0h1v11H3V8.5L0 5.5l3-3zM8 0H7v11h1V8.5l3-3-3-3z" /></Svg></button>
        <button type="button" className="ml-[209px] h-4 w-[134px] rounded-[2px] border border-[#303030] bg-[#1a1a1a] text-[11px] leading-[14px] text-[#8f8f8f]">スイッチ / モード</button>
        <Svg w={10} h={5} className="ml-[139px]"><path d="M0 5l2-2 1 1 3-4 4 5z" /></Svg>
        <input
          type="range"
          aria-label="ズーム"
          defaultValue={62}
          className="ml-[15px] mr-[11px] h-[10px] w-[44px] appearance-none bg-transparent [&::-webkit-slider-runnable-track]:h-[2px] [&::-webkit-slider-runnable-track]:bg-[#424242] [&::-webkit-slider-thumb]:-mt-[4px] [&::-webkit-slider-thumb]:h-[10px] [&::-webkit-slider-thumb]:w-[10px] [&::-webkit-slider-thumb]:appearance-none [&::-webkit-slider-thumb]:rounded-full [&::-webkit-slider-thumb]:border-2 [&::-webkit-slider-thumb]:border-[#b0b0b0] [&::-webkit-slider-thumb]:bg-[#232323]"
        />
        <Svg w={17} h={9}><path d="M0 9l4-6 1.5 2L3 9zM4 9l6-9 7 9z" /></Svg>
        <span className="ml-1 flex h-full flex-1 items-center justify-end bg-[#1d1d1d]"><span className="h-[15px] w-[199px] rounded-full bg-[#323232]" /></span>
        <span className="w-[18px]" />
      </div>
    </section>
  );
}

export default function App() {
  return (
    <div className="relative flex h-screen overflow-hidden pb-[22px] pl-[19px] pr-[22px] pt-5 font-['Noto_Sans_CJK_JP','Noto_Sans',sans-serif] [font-feature-settings:'palt']">
      <Wallpaper />
      <main className="relative flex min-w-0 flex-1 flex-col overflow-hidden rounded-[7px] border-x border-[#2c3550] bg-[#171717] shadow-lg">
        <TitleBar />
        <Toolbar />
        <div className="flex min-h-0 flex-1">
          <ProjectPanel />
          <span className="w-1 shrink-0" />
          <CompPanel />
          <span className="w-1 shrink-0" />
          <SidePanels />
        </div>
        <Timeline />
      </main>
    </div>
  );
}
